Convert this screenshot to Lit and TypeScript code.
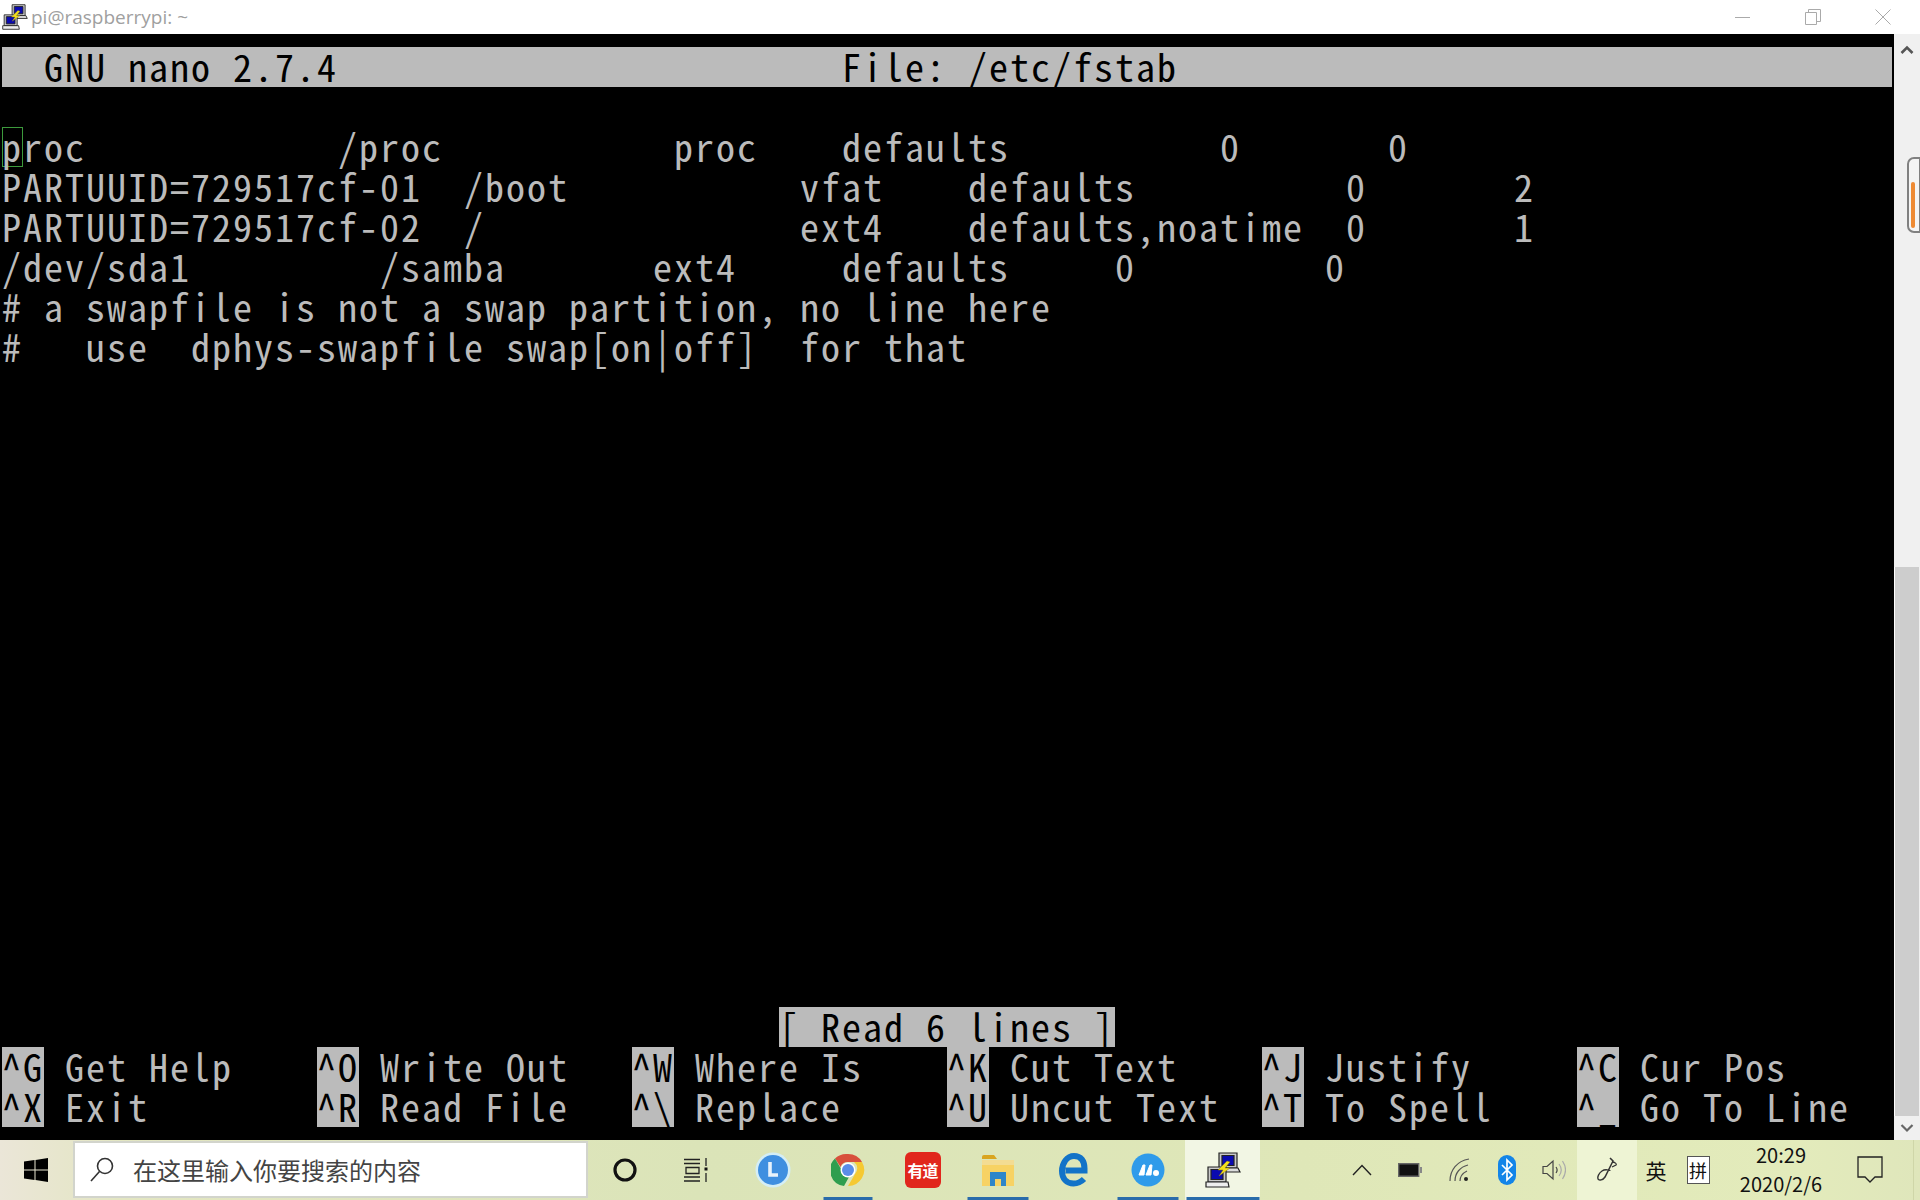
import { LitElement, html, css } from "lit";
import { customElement } from "lit/decorators.js";

const at = (cells: [number, string][]) => {
  let s = "";
  for (const [c, t] of cells) s = s.padEnd(c, " ") + t;
  return s;
};

const lines = [
  at([[1, "roc"], [16, "/proc"], [32, "proc"], [40, "defaults"], [58, "0"], [66, "0"]]),
  at([[0, "PARTUUID=729517cf-01"], [22, "/boot"], [38, "vfat"], [46, "defaults"], [64, "0"], [72, "2"]]),
  at([[0, "PARTUUID=729517cf-02"], [22, "/"], [38, "ext4"], [46, "defaults,noatime"], [64, "0"], [72, "1"]]),
  at([[0, "/dev/sda1"], [18, "/samba"], [31, "ext4"], [40, "defaults"], [53, "0"], [63, "0"]]),
  "# a swapfile is not a swap partition, no line here",
  "#   use  dphys-swapfile swap[on|off]  for that",
];

const keys1: [string, string][] = [["^G", "Get Help"], ["^O", "Write Out"], ["^W", "Where Is"], ["^K", "Cut Text"], ["^J", "Justify"], ["^C", "Cur Pos"]];
const keys2: [string, string][] = [["^X", "Exit"], ["^R", "Read File"], ["^\\", "Replace"], ["^U", "Uncut Text"], ["^T", "To Spell"], ["^_", "Go To Line"]];

const putty = (s: number) => html`<svg width=${s} height=${s} viewBox="0 0 36 36">
  <g stroke="#222" stroke-width="1.2">
    <path d="M14 1h18v15H14z" fill="#c9c9c9"/><path d="M17 3.500h12v10H17z" fill="#0a0ab0"/>
    <path d="M11 16h22l2 4H13z" fill="#ddd"/>
    <path d="M3 15h18v15H3z" fill="#c9c9c9"/><path d="M6 17.500h12v10H6z" fill="#0a0ab0"/>
    <path d="M1 30h22l1 5H1z" fill="#eee"/>
  </g>
  <path d="M22 9l-9 9h5l-4 6 11-8h-5l5-6z" fill="#f4e01c" stroke="#8a7a10" stroke-width=".5"/>
</svg>`;

const slots = [
  { w: 75, u: 0, a: false, icon: html`<svg width="36" height="36" viewBox="0 0 36 36"><circle cx="18" cy="18" r="17.500" fill="#d4eef6"/><circle cx="18" cy="18" r="15" fill="#3f8fe0"/><path d="M15 10v13h8" fill="none" stroke="#e8f2fb" stroke-width="3.600"/></svg>` },
  { w: 75, u: 49, a: false, icon: html`<svg width="34" height="34" viewBox="0 0 34 34">
    <path d="M17 1A16 16 0 0 1 31 9H17a8 8 0 0 0-7.500 5L4 5.500A16 16 0 0 1 17 1z" fill="#d8503c"/>
    <path d="M4 5.500l7 12a7.500 7.500 0 0 0 7 6.500l-5 9A16 16 0 0 1 4 5.500z" fill="#2f9e4f"/>
    <path d="M31 9a16 16 0 0 1-14 24l7-12a8 8 0 0 0-1-12z" fill="#f5c932"/>
    <circle cx="17" cy="17" r="7.500" fill="#fff"/><circle cx="17" cy="17" r="6" fill="#5a8de8"/></svg>` },
  { w: 75, u: 0, a: false, icon: html`<div class="yd">有道</div>` },
  { w: 75, u: 61, a: false, icon: html`<svg width="34" height="36" viewBox="0 0 34 36">
    <path d="M1 5a2 2 0 0 1 2-2h10l3 4H1z" fill="#d9a520"/><path d="M1 8h32v26H1z" fill="#f7d264"/>
    <path d="M1 8h32v5H1z" fill="#f3dc93"/><path d="M9 20h16v14h-5v-7h-6v7H9z" fill="#2f86c9"/></svg>` },
  { w: 75, u: 0, a: false, icon: html`<svg width="32" height="36" viewBox="0 0 32 36"><path d="M27 27c-3 3-6.500 4.500-10.500 4.500C9.500 31.500 5 26.500 5 19 5 11 10 4 17 4c7 0 10.500 5 10.500 12.500v2H8.500" fill="none" stroke="#1273c8" stroke-width="6"/></svg>` },
  { w: 75, u: 61, a: false, icon: html`<svg width="34" height="34" viewBox="0 0 34 34"><circle cx="17" cy="17" r="16.500" fill="#2f9bea"/><path d="M8 22l4-10 2 0-1 10zM15 22l4-10 2 0-1 10z" fill="#fff" stroke="#fff" stroke-linejoin="round"/><circle cx="25" cy="20" r="3" fill="#fff"/></svg>` },
  { w: 75, u: 73, a: true, icon: putty(36) },
];

@customElement("app-root")
export class AppRoot extends LitElement {
  static styles = css`
    :host { display: block; width: 1920px; height: 1200px; overflow: hidden; }
    .page { display: flex; flex-direction: column; height: 1200px; background: #000; }
    .titlebar { height: 34px; flex: none; background: #fff; display: flex; align-items: center; padding-left: 2px;
      font: 19px "Open Sans", "Noto Sans", sans-serif; color: #a0a0a0; }
    .titlebar .txt { margin-left: 3px; flex: 1; }
    .wbtns { display: flex; align-items: center; gap: 54px; padding-right: 29px; }
    .main { flex: 1; display: flex; min-height: 0; }
    .term { width: 1894px; flex: none; box-sizing: border-box; padding: 13px 0 0 2px; background: #000; color: #bbb;
      font-family: "Noto Sans CJK JP", "Liberation Mono", monospace; font-size: 38px; letter-spacing: 2px;
      font-feature-settings: "hwid" 1; font-weight: 400; display: flex; flex-direction: column; }
    .row { height: 40px; line-height: 37px; white-space: pre; flex: none; display: flex; width: 1890px; }
    .row span { display: block; height: 40px; }
    .spacer { flex: 1; }
    .inv { background: #bbb; color: #000; }
    .cur { box-shadow: inset 0 0 0 1px #3c9a3c; }
    .keys { display: grid; grid-template-columns: repeat(6, 315px); }
    .keys > div { display: flex; }
    .k { width: 42px; background: #bbb; color: #000; }
    .l { margin-left: 21px; }
    .status { margin-left: 777px; width: 336px; }
    .bar { flex: none; width: 26px; background: #f0f0f0; display: flex; flex-direction: column; align-items: flex-end; box-sizing: border-box; }
    .arrow { height: 24px; width: 26px; display: flex; align-items: center; justify-content: center; flex: none; }
    .arrow.up { margin-top: 4px; }
    .thumb { margin-top: 95px; width: 13px; height: 76px; box-sizing: border-box; border: 2px solid #808080; border-right-width: 1px;
      border-radius: 7px 0 0 7px; background: #f4f4f4; display: flex; flex-direction: column; justify-content: flex-end; padding: 0 4px 3px 2px; flex: none; }
    .thumb i { display: block; height: 46px; background: #ee8a33; border-radius: 3px; }
    .track { margin-top: 334px; flex: 1; width: 25px; background: #cdcdcd; border-left: 1px solid #fff; box-sizing: border-box; margin-right: 1px; }
    .barb { height: 13px; flex: none; }
    .taskbar { height: 60px; flex: none; display: flex; align-items: stretch; color: #111;
      background: linear-gradient(90deg, #ebe6d8 0, #e3e6c2 120px, #dbe4b8 700px, #dfe7b8 1300px, #e3ebbb 1800px, #dfe6bb 100%); font-family: "Noto Sans CJK SC", sans-serif; }
    .start { width: 73px; display: flex; align-items: center; justify-content: center; padding-right: 2px; box-sizing: border-box; }
    .search { width: 515px; box-sizing: border-box; margin: 1px 0 2px; background: #fff; border: 2px solid #d2d4cc; display: flex; align-items: center; padding-left: 15px; gap: 18px;
      font-size: 24px; color: #444; letter-spacing: 0; }
    .cell { display: flex; align-items: center; justify-content: center; flex: none; position: relative; }
    .cell .u { position: absolute; bottom: 0; left: 50%; height: 3px; background: #2a6cab; transform: translateX(-50%); }
    .cell.a { background: #f2f6e4; }
    .cort { width: 73px; } .tv { width: 74px; padding-right: 4px; box-sizing: border-box; }
    .yd { width: 36px; height: 36px; background: #e1261c; border-radius: 6px; color: #fff; font-size: 16px; font-weight: 700; line-height: 36px; text-align: center; letter-spacing: -1px; }
    .gap { width: 81px; flex: none; }
    .tray { display: flex; align-items: center; justify-content: center; flex: none; height: 60px; }
    .pen { background: #eef4d4; width: 60px; }
    .ime { font-size: 21px; color: #111; width: 38px; }
    .pin { width: 23px; height: 28px; background: #fff; border: 1px solid #555; font-size: 18px; line-height: 26px; text-align: center; color: #111; box-sizing: border-box; }
    .clock { width: 120px; display: flex; flex-direction: column; align-items: center; font-size: 20px; line-height: 29px; color: #111; }
    .note { width: 72px; padding-right: 14px; box-sizing: border-box; }
    .rest { flex: 1; border-left: 1px solid #cfd6a8; }
  `;

  render() {
    return html`<div class="page">
      <div class="titlebar">
        ${putty(26)}<span class="txt">pi@raspberrypi: ~</span>
        <div class="wbtns">
          <svg width="16" height="16" viewBox="0 0 16 16"><path d="M0 8.500h15" stroke="#aaa" fill="none"/></svg>
          <svg width="16" height="16" viewBox="0 0 16 16"><path d="M.5 3.500h11v12H.500zM3.500 3.500V.5h12v12h-4" stroke="#aaa" fill="none"/></svg>
          <svg width="16" height="16" viewBox="0 0 16 16"><path d="M.5.5l15 15M15.500.5l-15 15" stroke="#aaa" fill="none"/></svg>
        </div>
      </div>
      <div class="main">
        <div class="term">
          <div class="row inv"><span>${at([[2, "GNU nano 2.7.4"], [40, "File: /etc/fstab"]])}</span></div>
          <div class="row"></div>
          <div class="row"><span class="cur">p</span><span>${lines[0].slice(1)}</span></div>
          ${lines.slice(1).map((l) => html`<div class="row"><span>${l}</span></div>`)}
          <div class="spacer"></div>
          <div class="row"><span class="inv status">[ Read 6 lines ]</span></div>
          <div class="row keys">${keys1.map(([k, l]) => html`<div><span class="k">${k}</span><span class="l">${l}</span></div>`)}</div>
          <div class="row keys">${keys2.map(([k, l]) => html`<div><span class="k">${k}</span><span class="l">${l}</span></div>`)}</div>
          <div class="barb"></div>
        </div>
        <div class="bar">
          <div class="arrow up"><svg width="14" height="10" viewBox="0 0 14 10"><path d="M1.500 8L7 2.500 12.500 8" fill="none" stroke="#555" stroke-width="2.600"/></svg></div>
          <div class="thumb"><i></i></div>
          <div class="track"></div>
          <div class="arrow"><svg width="14" height="10" viewBox="0 0 14 10"><path d="M1.500 2L7 7.500 12.500 2" fill="none" stroke="#666" stroke-width="2.200"/></svg></div>
        </div>
      </div>
      <div class="taskbar">
        <div class="start"><svg width="24" height="24" viewBox="0 0 24 24"><path d="M0 3.400L10.500 2v9.500H0zM11.500 1.900L24 0v11.500H11.500zM0 12.500h10.500V22L0 20.600zM11.500 12.500H24V24l-12.500-1.900z" fill="#000"/></svg></div>
        <div class="search">
          <svg width="25" height="25" viewBox="0 0 25 25"><circle cx="15" cy="9" r="7.500" fill="none" stroke="#333" stroke-width="1.600"/><path d="M9.500 14.500L1 24" stroke="#333" stroke-width="1.600"/></svg>
          <span>在这里输入你要搜索的内容</span>
        </div>
        <div class="cell cort"><svg width="26" height="26" viewBox="0 0 26 26"><circle cx="13" cy="13" r="10" fill="none" stroke="#111" stroke-width="3.200"/></svg></div>
        <div class="cell tv"><svg width="26" height="26" viewBox="0 0 26 26"><path d="M1 2.500h16M1 6.500h16M3 10.500h13v6H3zM1 20h16M1 24h16M23 1v8M23 16v9" fill="none" stroke="#222" stroke-width="1.300"/><path d="M21.500 10.500h3v3h-3z" fill="#111"/></svg></div>
        ${slots.map((s) => html`<div class="cell ${s.a ? "a" : ""}" style="width:${s.w}px">${s.icon}${s.u ? html`<div class="u" style="width:${s.u}px"></div>` : ""}</div>`)}
        <div class="gap"></div>
        <div class="tray" style="width:42px"><svg width="20" height="12" viewBox="0 0 20 12"><path d="M1 11l9-9.500 9 9.500" fill="none" stroke="#222" stroke-width="1.400"/></svg></div>
        <div class="tray" style="width:54px"><svg width="24" height="14" viewBox="0 0 24 14"><path d="M.7.700h20v12.600H.7z" fill="#111" stroke="#666" stroke-width="1.400"/><path d="M22 4h2v6h-2z" fill="#888"/></svg></div>
        <div class="tray" style="width:46px"><svg width="22" height="24" viewBox="0 0 22 24"><g fill="none" stroke="#555" stroke-width="1.200"><path d="M1 23C1 12 8 3 20 1"/><path d="M6 23C6 15 11 9 19 7"/><path d="M11 23c0-5 3-8 7-10"/></g><circle cx="17" cy="21" r="2" fill="#222"/></svg></div>
        <div class="tray" style="width:48px"><svg width="18" height="30" viewBox="0 0 18 30"><rect width="18" height="30" rx="9" fill="#1385e8"/><path d="M4 10l10 10-5 5V5l5 5L4 20" fill="none" stroke="#fff" stroke-width="1.700"/></svg></div>
        <div class="tray" style="width:46px"><svg width="24" height="24" viewBox="0 0 24 24"><path d="M1 8.500h4L11 3v18l-6-5.500H1z" fill="none" stroke="#444" stroke-width="1.200"/><path d="M14 9c1.500 2 1.500 4 0 6" fill="none" stroke="#444" stroke-width="1.200"/><path d="M17 6c3 4 3 8 0 12M20.500 3c4 6 4 12 0 18" fill="none" stroke="#aaa" stroke-width="1.200"/></svg></div>
        <div class="tray pen"><svg width="22" height="26" viewBox="0 0 22 26"><path d="M14 1l3 3-8 16c-2 3-6 4-7 2s1-6 4-8c3-2 8-1 8 0" fill="none" stroke="#333" stroke-width="1.500"/><path d="M16 5c3 0 5 2 4 3l-4 2" fill="none" stroke="#333" stroke-width="1.300"/></svg></div>
        <div class="tray ime">英</div>
        <div class="tray" style="width:46px"><div class="pin">拼</div></div>
        <div class="clock"><span>20:29</span><span>2020/2/6</span></div>
        <div class="tray note"><svg width="26" height="28" viewBox="0 0 26 28"><path d="M1 1h24v20h-7l-5 5-5-5H1z" fill="none" stroke="#222" stroke-width="1.300"/></svg></div>
        <div class="rest"></div>
      </div>
    </div>`;
  }
}
